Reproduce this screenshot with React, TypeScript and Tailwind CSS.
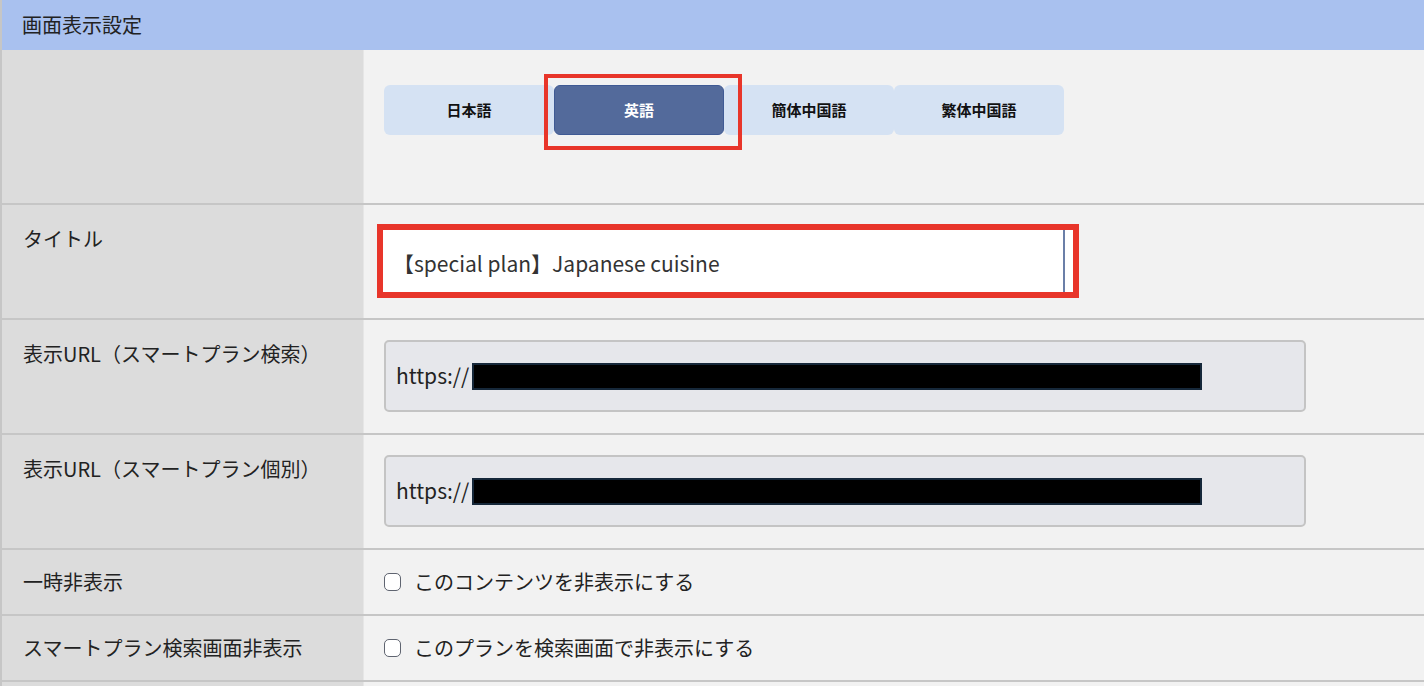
import { ReactNode } from "react";

const FONT = { fontFamily: '"Noto Sans CJK JP", "Noto Sans", sans-serif' };

const langs = ["日本語", "英語", "簡体中国語", "繁体中国語"];
const selected = "英語";

function Row({ label, height, center, children }: { label: string; height: string; center?: boolean; children: ReactNode }) {
  return (
    <div className={`flex border-b-2 border-[#c6c6c6] ${height}`}>
      <div
        className={`w-[362px] shrink-0 bg-[#dcdcdc] border-r border-[#e6e6e6] pl-[21px] text-[20px] text-[#222] ${
          center ? "flex items-center" : "pt-[19px]"
        }`}
      >
        {label}
      </div>
      <div className="flex-1 bg-[#f2f2f2] pl-[20px]">{children}</div>
    </div>
  );
}

function UrlBox() {
  return (
    <div className="pt-[20px]">
      <div className="w-[922px] h-[72px] bg-[#e6e7eb] border-2 border-[#c4c4c4] rounded-[5px] flex items-center pl-[10px] text-[21px] text-[#222]">
        <span className="w-[76px]">https://</span>
        <div className="w-[730px] h-[27px] bg-black border-2 border-[#16283a]" />
      </div>
    </div>
  );
}

function Check({ text }: { text: string }) {
  return (
    <div className="h-full flex items-center gap-[13px] text-[20px] text-[#222]">
      <div className="w-[17px] h-[18px] rounded-[5px] border-[1.5px] border-[#5f6470] bg-white" />
      <span>{text}</span>
    </div>
  );
}

export default function App() {
  return (
    <div className="w-[1424px] h-[686px] overflow-hidden bg-[#f2f2f2] border-l-2 border-[#c6c6c6]" style={FONT}>
      <div className="h-[50px] bg-[#a9c1ef] flex items-center pl-[20px] text-[20px] text-[#222]">画面表示設定</div>

      <Row label="" height="h-[155px]">
        <div className="pt-[35px] relative">
          <div className="flex">
            {langs.map((l) => (
              <div
                key={l}
                className={`w-[170px] h-[50px] rounded-[6px] flex items-center justify-center text-[15px] font-bold ${
                  l === selected ? "bg-[#536a9b] text-white border border-[#3f5a94]" : "bg-[#d5e2f3] text-[#111]"
                }`}
              >
                {l}
              </div>
            ))}
          </div>
          <div className="absolute left-[160px] top-[24px] w-[198px] h-[76px] border-4 border-[#e8352a]" />
        </div>
      </Row>

      <Row label="タイトル" height="h-[115px]">
        <div className="pt-[19px]">
          <div className="w-[702px] h-[74px] border-[6px] border-[#e8352a] -ml-[7px] bg-white">
            <div className="h-full bg-white border-r-2 border-[#6b7fa8] mr-[8px] flex items-center pl-[10px] pt-[6px] text-[21px] text-[#333]">
              【special plan】Japanese cuisine
            </div>
          </div>
        </div>
      </Row>

      <Row label="表示URL（スマートプラン検索）" height="h-[115px]">
        <UrlBox />
      </Row>

      <Row label="表示URL（スマートプラン個別）" height="h-[115px]">
        <UrlBox />
      </Row>

      <Row label="一時非表示" height="h-[66px]" center>
        <Check text="このコンテンツを非表示にする" />
      </Row>

      <Row label="スマートプラン検索画面非表示" height="h-[66px]" center>
        <Check text="このプランを検索画面で非表示にする" />
      </Row>

      <Row label="" height="h-[40px]">
        <div />
      </Row>
    </div>
  );
}
